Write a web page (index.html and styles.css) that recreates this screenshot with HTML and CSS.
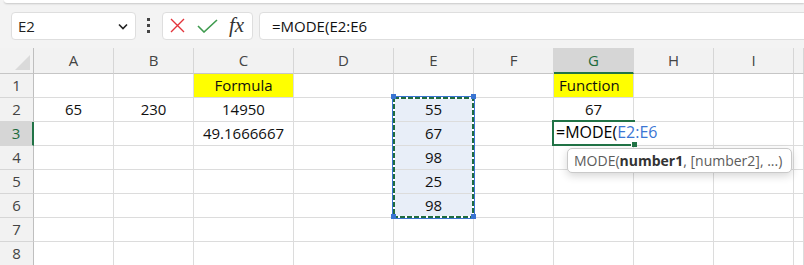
FILE: index.html
```html
<!DOCTYPE html>
<html lang="en">
  <head>
    <meta charset="UTF-8" />
    <title>MODE function</title>
    <link rel="stylesheet" href="styles.css">
  </head>
  <body>
    <div class="ribbon-edge"></div>

    <div class="formula-bar">
      <div class="name-box">
        <span>E2</span>
        <svg class="chevron" width="10" height="7" viewBox="0 0 10 7"><path d="M1 1.5 L5 5.5 L9 1.5" fill="none" stroke="#222" stroke-width="1.6"/></svg>
      </div>
      <div class="grip"><i></i><i></i><i></i></div>
      <div class="edit-buttons">
        <svg width="15" height="15" viewBox="0 0 15 15"><path d="M1 1 L14 14 M14 1 L1 14" stroke="#e3343b" stroke-width="1.4"/></svg>
        <svg width="21" height="14" viewBox="0 0 21 14"><path d="M1 7 L7 13 L20 1" fill="none" stroke="#3f9b4f" stroke-width="1.6"/></svg>
        <span class="fx">fx</span>
      </div>
      <div class="formula-input">=MODE(E2:E6</div>
    </div>

    <div class="sheet">
      <div class="grid">
        <div class="corner"><span class="corner-mark"></span></div>
        <div class="col-head">A</div>
        <div class="col-head">B</div>
        <div class="col-head">C</div>
        <div class="col-head">D</div>
        <div class="col-head">E</div>
        <div class="col-head">F</div>
        <div class="col-head current">G</div>
        <div class="col-head">H</div>
        <div class="col-head">I</div>
        <div class="col-head"></div>

        <div class="row-head">1</div>
        <div class="cell"></div><div class="cell"></div>
        <div class="cell yellow">Formula</div>
        <div class="cell"></div><div class="cell"></div><div class="cell"></div>
        <div class="cell yellow left">Function</div>
        <div class="cell"></div><div class="cell"></div><div class="cell"></div>

        <div class="row-head">2</div>
        <div class="cell">65</div><div class="cell">230</div><div class="cell">14950</div>
        <div class="cell"></div><div class="cell ref">55</div><div class="cell"></div>
        <div class="cell">67</div>
        <div class="cell"></div><div class="cell"></div><div class="cell"></div>

        <div class="row-head current">3</div>
        <div class="cell"></div><div class="cell"></div><div class="cell">49.1666667</div>
        <div class="cell"></div><div class="cell ref">67</div><div class="cell"></div>
        <div class="cell editing"></div>
        <div class="cell"></div><div class="cell"></div><div class="cell"></div>

        <div class="row-head">4</div>
        <div class="cell"></div><div class="cell"></div><div class="cell"></div>
        <div class="cell"></div><div class="cell ref">98</div><div class="cell"></div>
        <div class="cell"></div><div class="cell"></div><div class="cell"></div><div class="cell"></div>

        <div class="row-head">5</div>
        <div class="cell"></div><div class="cell"></div><div class="cell"></div>
        <div class="cell"></div><div class="cell ref">25</div><div class="cell"></div>
        <div class="cell"></div><div class="cell"></div><div class="cell"></div><div class="cell"></div>

        <div class="row-head">6</div>
        <div class="cell"></div><div class="cell"></div><div class="cell"></div>
        <div class="cell"></div><div class="cell ref">98</div><div class="cell"></div>
        <div class="cell"></div><div class="cell"></div><div class="cell"></div><div class="cell"></div>

        <div class="row-head">7</div>
        <div class="cell"></div><div class="cell"></div><div class="cell"></div>
        <div class="cell"></div><div class="cell"></div><div class="cell"></div>
        <div class="cell"></div><div class="cell"></div><div class="cell"></div><div class="cell"></div>

        <div class="row-head">8</div>
        <div class="cell"></div><div class="cell"></div><div class="cell"></div>
        <div class="cell"></div><div class="cell"></div><div class="cell"></div>
        <div class="cell"></div><div class="cell"></div><div class="cell"></div><div class="cell"></div>
      </div>

      <!-- referenced range E2:E6 with marching ants -->
      <svg class="marquee" width="88" height="129" viewBox="0 0 88 129">
        <rect x="2.5" y="3.5" width="82" height="122" fill="none" stroke="#3a74d2" stroke-width="1"/>
        <rect x="4" y="5" width="79" height="119" fill="none" stroke="#fff" stroke-width="2"/>
        <rect x="4" y="5" width="79" height="119" fill="none" stroke="#1f6b3f" stroke-width="2" stroke-dasharray="5 2"/>
        <rect x="1" y="1" width="5" height="5" fill="#3a74d2"/>
        <rect x="81" y="1" width="5" height="5" fill="#3a74d2"/>
        <rect x="1" y="121" width="5" height="5" fill="#3a74d2"/>
        <rect x="81" y="121" width="5" height="5" fill="#3a74d2"/>
      </svg>

      <div class="active-cell">
        <span>=MODE(</span><span class="ref-text">E2:E6</span>
        <i class="fill-handle"></i>
      </div>

      <div class="tooltip">MODE(<b>number1</b>, [number2], ...)</div>
    </div>
  </body>
</html>
```

FILE: styles.css
```css
body {
  margin: 0;
  background-color: #f3f3f3;
  font-family: "Open Sans", "Noto Sans", sans-serif;
  width: 804px;
  height: 265px;
  overflow: hidden;
}

.ribbon-edge {
  height: 3px;
  margin-left: 4px;
  background-color: #fff;
  border-bottom-left-radius: 6px;
  box-shadow: 0 1px 2px rgba(0, 0, 0, 0.18);
}

.formula-bar {
  display: flex;
  align-items: center;
  gap: 0;
  height: 45px;
  padding-left: 11px;
}

.name-box {
  display: flex;
  align-items: center;
  justify-content: space-between;
  box-sizing: border-box;
  width: 125px;
  height: 28px;
  padding: 0 7px 0 6px;
  background: #fff;
  border: 1px solid #dedede;
  border-radius: 4px;
  font-size: 15px;
  color: #222;
}

.chevron {
  margin-top: 1px;
}

.grip {
  display: flex;
  flex-direction: column;
  gap: 3px;
  margin: 0 12px 0 11px;
}

.grip i {
  display: block;
  width: 3px;
  height: 3px;
  background: #444;
}

.edit-buttons {
  display: flex;
  align-items: center;
  box-sizing: border-box;
  width: 91px;
  height: 28px;
  padding-left: 7px;
  gap: 12px;
  background: #fff;
  border: 1px solid #dedede;
  border-radius: 4px;
}

.fx {
  font-family: "Liberation Serif", serif;
  font-style: italic;
  font-size: 21px;
  color: #333;
  margin-left: -1px;
  line-height: 1;
}

.formula-input {
  flex: 1;
  box-sizing: border-box;
  height: 28px;
  margin-left: 6px;
  margin-right: -10px;
  padding-left: 12px;
  line-height: 26px;
  background: #fff;
  border: 1px solid #dedede;
  border-radius: 4px;
  font-size: 15px;
  color: #111;
}

.sheet {
  position: relative;
  background: #fff;
}

.grid {
  display: grid;
  grid-template-columns: 34px 80px 80px 100px 100px 80px 80px 80px 80px 80px 1fr;
  grid-template-rows: 26px repeat(8, 24px);
  font-size: 15px;
}

.grid > div {
  box-sizing: border-box;
  white-space: nowrap;
}

.corner,
.col-head,
.row-head {
  background: #f2f2f2;
  color: #444;
  text-align: center;
}

.corner {
  position: relative;
  border-right: 1px solid #bfbfbf;
  border-bottom: 1px solid #c6c6c6;
}

.corner-mark {
  position: absolute;
  right: 3px;
  bottom: 3px;
  width: 0;
  height: 0;
  border-left: 15px solid transparent;
  border-bottom: 15px solid #dadada;
}

.col-head {
  line-height: 25px;
  border-right: 1px solid #d6d6d6;
  border-bottom: 1px solid #c6c6c6;
}

.col-head.current {
  background: #d6d6d6;
  color: #1d6b3c;
  border-bottom: 2px solid #217346;
}

.row-head {
  line-height: 23px;
  border-right: 1px solid #bfbfbf;
  border-bottom: 1px solid #d6d6d6;
}

.row-head.current {
  background: #d6d6d6;
  color: #1d6b3c;
  border-right: 2px solid #217346;
}

.cell {
  line-height: 23px;
  text-align: center;
  color: #111;
  border-right: 1px solid #dcdcdc;
  border-bottom: 1px solid #dcdcdc;
}

.cell.yellow {
  background: #ffff00;
}

.cell.left {
  text-align: left;
  padding-left: 5px;
}

.cell.ref {
  background: #e8eef8;
}

.cell.editing {
  border-right-color: transparent;
}

.marquee {
  position: absolute;
  left: 390px;
  top: 45px;
}

.active-cell {
  position: absolute;
  left: 552px;
  top: 72px;
  box-sizing: border-box;
  width: 83px;
  height: 26px;
  padding-left: 2px;
  border: 2px solid #217346;
  border-right: none;
  background: transparent;
  font-size: 16px;
  line-height: 21px;
  white-space: nowrap;
  color: #000;
}

.ref-text {
  color: #3b76d4;
}

.fill-handle {
  position: absolute;
  right: -2px;
  bottom: -3px;
  width: 5px;
  height: 5px;
  background: #217346;
  border-left: 1px solid #fff;
  border-top: 1px solid #fff;
}

.tooltip {
  position: absolute;
  left: 567px;
  top: 100px;
  box-sizing: border-box;
  width: 225px;
  height: 25px;
  padding-left: 6px;
  background: #fff;
  border: 1px solid #c9c9c9;
  border-radius: 5px;
  box-shadow: 0 3px 8px rgba(0, 0, 0, 0.16);
  font-size: 14px;
  line-height: 23px;
  color: #5c5c5c;
  white-space: nowrap;
}

.tooltip b {
  color: #333;
}
```
